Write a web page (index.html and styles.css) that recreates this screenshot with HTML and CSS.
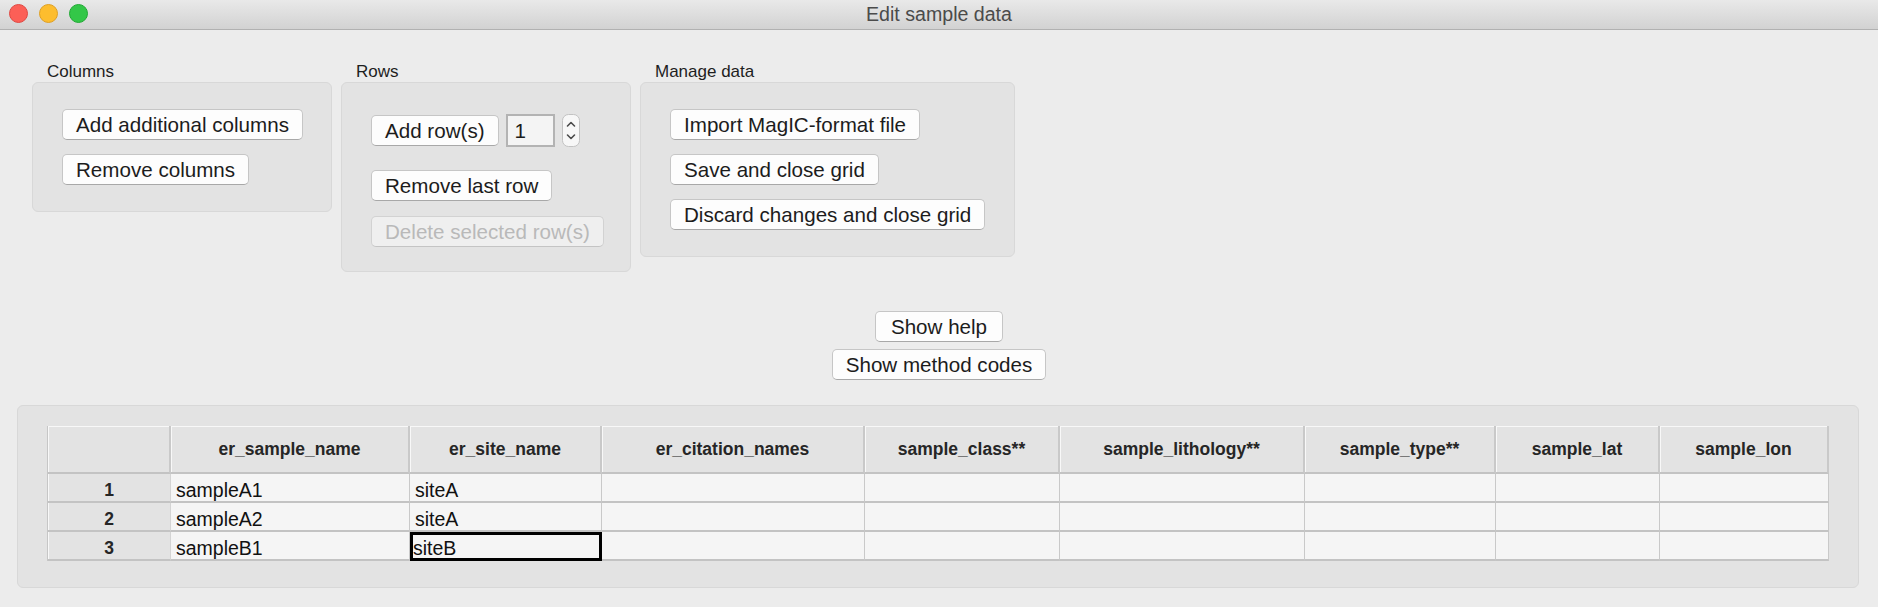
FILE: index.html
```html
<!DOCTYPE html>
<html lang="en">
<head>
<meta charset="utf-8">
<title>Edit sample data</title>
<link rel="stylesheet" href="styles.css">
</head>
<body>
<div class="window">
  <header class="titlebar">
    <div class="lights">
      <span class="light red"></span>
      <span class="light yellow"></span>
      <span class="light green"></span>
    </div>
    <div class="title">Edit sample data</div>
    <div></div>
  </header>

  <main class="content">
    <section class="groups">
      <div class="group">
        <div class="group-label">Columns</div>
        <div class="group-box box-columns">
          <button class="btn">Add additional columns</button>
          <button class="btn">Remove columns</button>
        </div>
      </div>

      <div class="group">
        <div class="group-label">Rows</div>
        <div class="group-box box-rows">
          <div class="spin-row">
            <button class="btn">Add row(s)</button>
            <div class="num">1</div>
            <div class="spinner">
              <svg width="18" height="33" viewBox="0 0 18 33">
                <rect x="0.5" y="0.5" width="17" height="32" rx="6" fill="#f7f7f7" stroke="#c2c2c2"/>
                <path d="M5.5 12 L9 8.5 L12.5 12" fill="none" stroke="#4a4a4a" stroke-width="1.6" stroke-linecap="round" stroke-linejoin="round"/>
                <path d="M5.5 21 L9 24.5 L12.5 21" fill="none" stroke="#4a4a4a" stroke-width="1.6" stroke-linecap="round" stroke-linejoin="round"/>
              </svg>
            </div>
          </div>
          <button class="btn">Remove last row</button>
          <button class="btn" disabled>Delete selected row(s)</button>
        </div>
      </div>

      <div class="group">
        <div class="group-label">Manage data</div>
        <div class="group-box box-manage">
          <button class="btn">Import MagIC-format file</button>
          <button class="btn">Save and close grid</button>
          <button class="btn">Discard changes and close grid</button>
        </div>
      </div>
    </section>

    <section class="center-btns">
      <button class="btn btn-help">Show help</button>
      <button class="btn">Show method codes</button>
    </section>

    <section class="grid-panel">
      <div class="grid">
        <div class="hd corner"></div>
        <div class="hd">er_sample_name</div>
        <div class="hd">er_site_name</div>
        <div class="hd">er_citation_names</div>
        <div class="hd">sample_class**</div>
        <div class="hd">sample_lithology**</div>
        <div class="hd">sample_type**</div>
        <div class="hd">sample_lat</div>
        <div class="hd">sample_lon</div>

        <div class="rl">1</div>
        <div class="cell">sampleA1</div>
        <div class="cell">siteA</div>
        <div class="cell"></div>
        <div class="cell"></div>
        <div class="cell"></div>
        <div class="cell"></div>
        <div class="cell"></div>
        <div class="cell"></div>

        <div class="rl">2</div>
        <div class="cell">sampleA2</div>
        <div class="cell">siteA</div>
        <div class="cell"></div>
        <div class="cell"></div>
        <div class="cell"></div>
        <div class="cell"></div>
        <div class="cell"></div>
        <div class="cell"></div>

        <div class="rl">3</div>
        <div class="cell">sampleB1</div>
        <div class="cell sel">siteB</div>
        <div class="cell"></div>
        <div class="cell"></div>
        <div class="cell"></div>
        <div class="cell"></div>
        <div class="cell"></div>
        <div class="cell"></div>
      </div>
    </section>
  </main>
</div>
</body>
</html>
```

FILE: styles.css
```css
html, body {
  margin: 0;
  padding: 0;
}

body {
  background: #ececec;
  font-family: "Liberation Sans", Arial, sans-serif;
  width: 1878px;
  height: 607px;
  overflow: hidden;
}

.window {
  width: 1878px;
  height: 607px;
}

/* ---------- title bar ---------- */
.titlebar {
  height: 29px;
  border-bottom: 1px solid #b1b1b1;
  background: linear-gradient(#e9e9e9, #d2d2d2);
  display: grid;
  grid-template-columns: 1fr auto 1fr;
  align-items: center;
}

.lights {
  display: flex;
  gap: 11px;
  padding-left: 9px;
  align-self: start;
  margin-top: 4px;
}

.light {
  width: 19px;
  height: 19px;
  border-radius: 50%;
  box-sizing: border-box;
  border: 1px solid;
}

.red { background: #fc5f57; border-color: #df4842; }
.yellow { background: #fdbd2e; border-color: #dfa023; }
.green { background: #33c748; border-color: #21a934; }

.title {
  font-size: 19.6px;
  color: #4b4b4b;
  line-height: 29px;
}

/* ---------- groups ---------- */
.content {
  padding-top: 31px;
}

.groups {
  display: flex;
  align-items: flex-start;
  gap: 9px;
  padding-left: 32px;
}

.group-label {
  font-size: 17px;
  line-height: 21px;
  padding-left: 15px;
  color: #1e1e1e;
}

.group-box {
  background: #e3e3e3;
  border: 1px solid #d8d8d8;
  border-radius: 6px;
  box-sizing: border-box;
  display: flex;
  flex-direction: column;
  align-items: flex-start;
  padding: 26px 29px 0;
}

.box-columns {
  width: 300px;
  height: 130px;
  gap: 14px;
}

.box-rows {
  width: 290px;
  height: 190px;
  padding-top: 31px;
  gap: 15px;
}

.box-manage {
  width: 375px;
  height: 175px;
  gap: 14px;
}

/* ---------- buttons ---------- */
.btn {
  font-family: "Liberation Sans", Arial, sans-serif;
  font-size: 20.6px;
  height: 31px;
  line-height: 29px;
  padding: 0 13px;
  box-sizing: border-box;
  background: #fdfdfd;
  border: 1px solid #c6c6c6;
  border-bottom-color: #a8a8a8;
  border-radius: 5px;
  color: #1c1c1c;
  white-space: nowrap;
}

.btn:disabled {
  color: #b9b9b9;
  background: #efefef;
  border-color: #d2d2d2;
  border-bottom-color: #c4c4c4;
}

.btn-help {
  padding: 0 15px;
}

.spin-row {
  display: flex;
  align-items: center;
  gap: 7px;
  margin-bottom: 8px;
}

.num {
  width: 49px;
  height: 33px;
  box-sizing: border-box;
  border: 2px solid #b3b3b3;
  background: #f4f4f4;
  font-size: 20.6px;
  line-height: 29px;
  padding-left: 7px;
  color: #1c1c1c;
}

.spinner {
  width: 18px;
  height: 33px;
}

.spinner svg {
  display: block;
}

/* ---------- center buttons ---------- */
.center-btns {
  display: flex;
  flex-direction: column;
  align-items: center;
  gap: 7px;
  margin-top: 39px;
}

/* ---------- grid panel ---------- */
.grid-panel {
  margin: 25px 19px 0 17px;
  height: 183px;
  box-sizing: border-box;
  background: #e3e3e3;
  border: 1px solid #d8d8d8;
  border-radius: 6px;
  padding: 20px 29px;
}

.grid {
  display: grid;
  grid-template-columns: 123px 239px 192px 263px 195px 245px 191px 164px 169px;
  grid-template-rows: 48px 29px 29px 29px;
  border-left: 1px solid #c6c6c6;
  width: max-content;
}

.hd {
  background: #e3e3e3;
  font-family: "Liberation Sans", Arial, sans-serif;
  font-weight: bold;
  font-size: 17.5px;
  line-height: 47px;
  text-align: center;
  color: #262626;
  box-sizing: border-box;
  border-right: 2px solid #c9c9c9;
  border-bottom: 2px solid #c3c3c3;
  box-shadow: inset 1px 1px 0 #f8f8f8;
  white-space: nowrap;
  overflow: hidden;
}

.rl {
  background: #e3e3e3;
  font-family: "Liberation Sans", Arial, sans-serif;
  font-weight: bold;
  font-size: 17.5px;
  line-height: 22px;
  padding-top: 5px;
  text-align: center;
  color: #262626;
  box-sizing: border-box;
  border-right: 1px solid #d4d4d4;
  border-bottom: 2px solid #c3c3c3;
  box-shadow: inset 1px 0 0 #f8f8f8;
}

.cell {
  background: #f5f5f5;
  font-size: 19.5px;
  line-height: 22px;
  padding: 5px 0 0 5px;
  color: #111;
  box-sizing: border-box;
  border-right: 1px solid #c9c9c9;
  border-bottom: 2px solid #c3c3c3;
  white-space: nowrap;
  overflow: hidden;
}

.cell.sel {
  outline: 3px solid #000;
  outline-offset: -3px;
  padding-left: 3px;
}
```
